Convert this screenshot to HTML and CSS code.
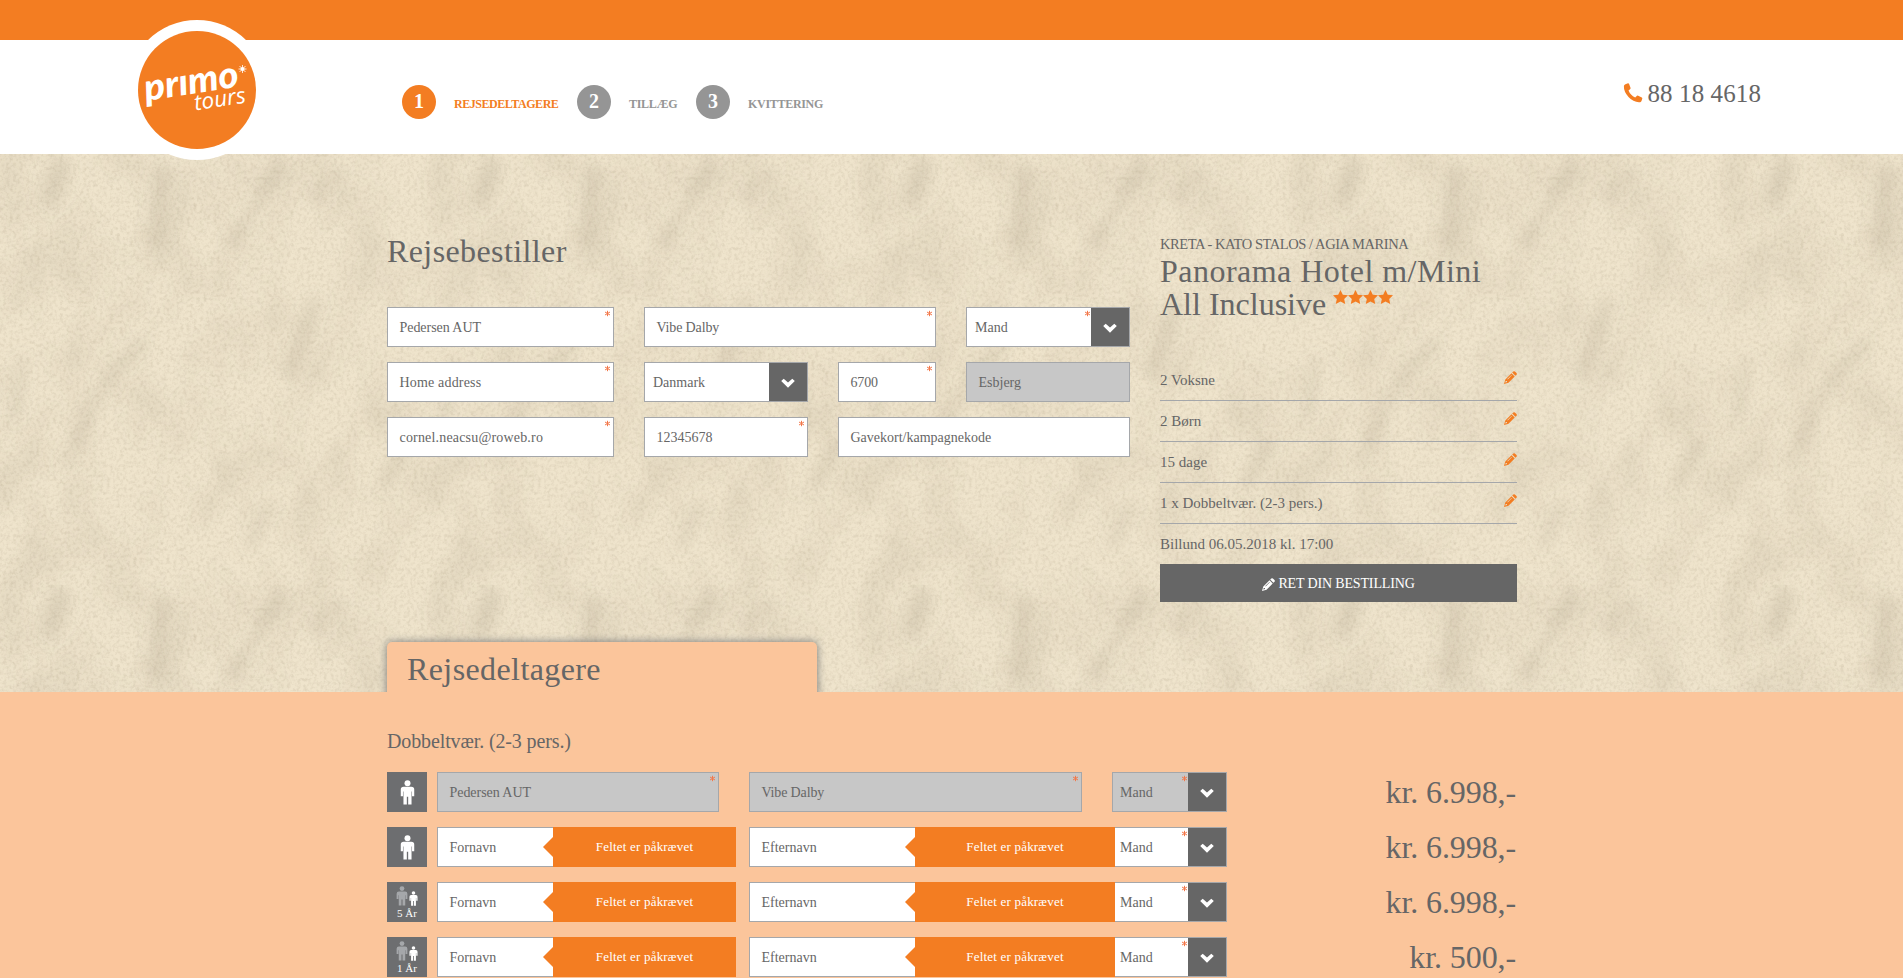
FILE: index.html
```
<!DOCTYPE html>
<html lang="da">
<head>
<meta charset="utf-8">
<title>Primo Tours - Rejsedeltagere</title>
<link rel="stylesheet" href="styles.css">
</head>
<body>
<svg class="defs" width="0" height="0" aria-hidden="true">
  <symbol id="star" viewBox="0 0 15 14"><path d="M7.500 0l2.300 4.700 5.200.6-3.800 3.600 1 5.100-4.700-2.500L2.800 14l1-5.100L0 5.300l5.200-.6z"/></symbol>
  <symbol id="pencil" viewBox="0 0 13 13"><path fill-rule="evenodd" d="M9.300.5q.8-.7 1.600 0L12.500 2.100q.7.800 0 1.600L11.400 4.800 8.200 1.600zM7.500 2.300l3.200 3.200L4.500 11.700 0 13 1.300 8.500zM1.700 10l-.4 1.600 1.200-.3.600-.5-.2-.7-.8-.2zM7.500 3.900L3.300 8.100l.4.4L7.900 4.300z"/></symbol>
  <symbol id="down" viewBox="0 0 14 10"><path d="M2.700.7L7 4.600 11.300.7 13.800 3.100 7 9.700.2 3.100z"/></symbol>
  <symbol id="ast" viewBox="0 0 7 7"><path d="M3.500.8v5.400M1 2l5 3M6 2l-5 3" fill="none" stroke="#f3784a" stroke-width="1"/></symbol>
  <symbol id="person" viewBox="0 0 15 26"><circle cx="7.500" cy="3.400" r="3.100"/><path d="M3.500 7h8Q14.500 7 14.500 10v7h-2.300v-5h-.5v13.500H8.200v-8H6.800v8H3.300V12h-.5v5H.5v-7Q.5 7 3.500 7z"/></symbol>
</svg>

<header class="header">
  <div class="topbar"></div>
  <div class="nav">
    <svg class="logo" viewBox="0 0 140 140" role="img" aria-label="Primo Tours">
      <circle cx="70" cy="70" r="70" fill="#fff"/>
      <circle cx="70" cy="70" r="59" fill="#f37d22"/>
      <g transform="rotate(-9 70 70)" fill="#fff">
        <text class="logo-main" x="18" y="73" textLength="95" lengthAdjust="spacingAndGlyphs">prımo</text>
        <text class="logo-sub" x="65" y="90" textLength="52" lengthAdjust="spacingAndGlyphs">tours</text>
      </g>
      <circle cx="115.500" cy="49" r="2" fill="#fff"/>
      <path d="M115.500 45v8M111.500 49h8M112.500 46l6 6M118.500 46l-6 6" stroke="#fff" stroke-width=".8"/>
    </svg>
    <ol class="steps">
      <li class="step step-on"><span class="num">1</span><span class="step-name">REJSEDELTAGERE</span></li>
      <li class="step"><span class="num">2</span><span class="step-name">TILLÆG</span></li>
      <li class="step"><span class="num">3</span><span class="step-name">KVITTERING</span></li>
    </ol>
    <div class="phone">
      <svg class="phone-icon" viewBox="0 0 20 20"><path d="M2.400 1.200L5 .3q.7-.1 1 .5l1.500 4q.2.700-.2 1.200L5.500 7.500q1.800 4.500 6.700 7l1.800-1.700q.5-.4 1.200-.1l3.600 1.700q.7.400.5 1.100l-.8 2.600q-.4.900-1.300 1.100-6.500.6-11.700-5.100Q.6 8.600.9 3.100 1.100 1.600 2.400 1.200z"/></svg>
      <span>88 18 4618</span>
    </div>
  </div>
</header>

<main>
<section class="sand">
  <svg class="texture" width="1903" height="538" aria-hidden="true">
    <defs>
      <filter id="grain" x="0" y="0" width="100%" height="100%" color-interpolation-filters="sRGB">
        <feTurbulence type="fractalNoise" baseFrequency=".3" numOctaves="3" seed="4" stitchTiles="stitch"/>
        <feColorMatrix values="0 0 0 0 .42  0 0 0 0 .36  0 0 0 0 .25  .9 .5 0 0 -.6"/>
      </filter>
      <filter id="clouds" x="0" y="0" width="100%" height="100%" color-interpolation-filters="sRGB">
        <feTurbulence type="fractalNoise" baseFrequency=".022 .014" numOctaves="4" seed="11" stitchTiles="stitch"/>
        <feColorMatrix values="0 0 0 0 .5  0 0 0 0 .44  0 0 0 0 .34  1.100 0 0 0 -.42"/>
      </filter>
      <filter id="soft" x="-50%" y="-50%" width="200%" height="200%"><feGaussianBlur stdDeviation="7"/></filter>
      <pattern id="paper" width="431" height="431" patternUnits="userSpaceOnUse">
        <rect width="431" height="431" fill="#efe4cc"/>
        <rect width="431" height="431" filter="url(#clouds)" opacity=".2"/>
        <g filter="url(#soft)" stroke="#b3a78f" fill="none" stroke-linecap="round" opacity=".3">
          <path d="M60 14L50 44" stroke-width="22"/>
          <path d="M280 8Q250 60 232 90" stroke-width="10"/>
          <path d="M162 18L155 88" stroke-width="16"/>
          <path d="M340 16L315 45" stroke-width="9"/>
          <path d="M314 150Q305 175 290 220" stroke-width="13"/>
          <path d="M140 190Q100 225 76 290L64 310" stroke-width="10"/>
          <path d="M405 290L385 330" stroke-width="13"/>
          <path d="M22 205L14 265" stroke-width="8"/>
          <path d="M270 350L250 390" stroke-width="9"/>
        </g>
        <rect width="431" height="431" filter="url(#grain)" opacity=".26"/>
      </pattern>
    </defs>
    <rect width="1903" height="538" fill="url(#paper)"/>
  </svg>
  <div class="wrap top">
    <form class="booker">
      <h1 class="title">Rejsebestiller</h1>
      <div class="form-row row-a">
        <div class="field ls-1">Pedersen AUT<svg class="ast"><use href="#ast"/></svg></div>
        <div class="field ls-2">Vibe Dalby<svg class="ast"><use href="#ast"/></svg></div>
        <div class="select"><span class="value">Mand<svg class="ast"><use href="#ast"/></svg></span><span class="drop"><svg class="down"><use href="#down"/></svg></span></div>
      </div>
      <div class="form-row row-b">
        <div class="field wide">Home address<svg class="ast"><use href="#ast"/></svg></div>
        <div class="select"><span class="value">Danmark</span><span class="drop"><svg class="down"><use href="#down"/></svg></span></div>
        <div class="field ls-2">6700<svg class="ast"><use href="#ast"/></svg></div>
        <div class="field off">Esbjerg</div>
      </div>
      <div class="form-row row-c">
        <div class="field wide">cornel.neacsu@roweb.ro<svg class="ast"><use href="#ast"/></svg></div>
        <div class="field">12345678<svg class="ast"><use href="#ast"/></svg></div>
        <div class="field">Gavekort/kampagnekode</div>
      </div>
    </form>
    <aside class="summary">
      <div class="place">KRETA - KATO STALOS / AGIA MARINA</div>
      <h2 class="hotel"><span class="hotel-a">Panorama Hotel m/Mini</span><br>All Inclusive <span class="stars"><svg><use href="#star"/></svg><svg><use href="#star"/></svg><svg><use href="#star"/></svg><svg><use href="#star"/></svg></span></h2>
      <ul class="facts">
        <li>2 Voksne<svg class="pencil"><use href="#pencil"/></svg></li>
        <li>2 Børn<svg class="pencil"><use href="#pencil"/></svg></li>
        <li>15 dage<svg class="pencil"><use href="#pencil"/></svg></li>
        <li>1 x Dobbeltvær. (2-3 pers.)<svg class="pencil"><use href="#pencil"/></svg></li>
        <li>Billund 06.05.2018 kl. 17:00</li>
      </ul>
      <div class="button"><svg class="pencil"><use href="#pencil"/></svg><span>RET DIN BESTILLING</span></div>
    </aside>
  </div>
  <div class="wrap"><h2 class="tab">Rejsedeltagere</h2></div>
</section>

<section class="travellers">
  <div class="wrap">
    <h3 class="room">Dobbeltvær. (2-3 pers.)</h3>
    <div class="guest">
      <div class="who"><svg class="adult"><use href="#person"/></svg></div>
      <div class="field off ls-1">Pedersen AUT<svg class="ast"><use href="#ast"/></svg></div>
      <div class="field off ls-2">Vibe Dalby<svg class="ast"><use href="#ast"/></svg></div>
      <div class="select off"><span class="value">Mand<svg class="ast"><use href="#ast"/></svg></span><span class="drop"><svg class="down"><use href="#down"/></svg></span></div>
      <div class="price">kr. 6.998,-</div>
    </div>
    <div class="guest">
      <div class="who"><svg class="adult"><use href="#person"/></svg></div>
      <div class="field">Fornavn<span class="error error-first">Feltet er påkrævet</span></div>
      <div class="field">Efternavn<span class="error error-last">Feltet er påkrævet</span></div>
      <div class="select"><span class="value">Mand<svg class="ast"><use href="#ast"/></svg></span><span class="drop"><svg class="down"><use href="#down"/></svg></span></div>
      <div class="price">kr. 6.998,-</div>
    </div>
    <div class="guest">
      <div class="who who-child"><div class="pair"><svg class="parent"><use href="#person"/></svg><svg class="child"><use href="#person"/></svg></div><span class="age">5 År</span></div>
      <div class="field">Fornavn<span class="error error-first">Feltet er påkrævet</span></div>
      <div class="field">Efternavn<span class="error error-last">Feltet er påkrævet</span></div>
      <div class="select"><span class="value">Mand<svg class="ast"><use href="#ast"/></svg></span><span class="drop"><svg class="down"><use href="#down"/></svg></span></div>
      <div class="price">kr. 6.998,-</div>
    </div>
    <div class="guest">
      <div class="who who-child"><div class="pair"><svg class="parent"><use href="#person"/></svg><svg class="child"><use href="#person"/></svg></div><span class="age">1 År</span></div>
      <div class="field">Fornavn<span class="error error-first">Feltet er påkrævet</span></div>
      <div class="field">Efternavn<span class="error error-last">Feltet er påkrævet</span></div>
      <div class="select"><span class="value">Mand<svg class="ast"><use href="#ast"/></svg></span><span class="drop"><svg class="down"><use href="#down"/></svg></span></div>
      <div class="price">kr. 500,-</div>
    </div>
  </div>
</section>
</main>
</body>
</html>
```
FILE: styles.css
```
* { box-sizing: border-box; }
body {
  margin: 0;
  height: 978px;
  overflow: hidden;
  font-family: "Liberation Serif", serif;
  font-size: 14px;
  color: #666;
  background: #fbc59b;
}
h1, h2, h3, ol, ul { margin: 0; padding: 0; font-weight: 400; list-style: none; }
svg { display: block; flex: none; }
.defs { position: absolute; }
.ls-1 { letter-spacing: -.05px; }
.ls-2 { letter-spacing: -.15px; }
.wide { letter-spacing: .18px; }

.header { position: relative; z-index: 2; }
.topbar { height: 40px; background: #f37d22; }
.nav { display: flex; align-items: flex-start; height: 114px; background: #fff; }
.logo { width: 140px; height: 140px; margin: -20px 0 0 127px; }
.logo-main { font: italic 900 37px Lato, sans-serif; }
.logo-sub { font: italic 400 22px "Open Sans", sans-serif; }
.steps { display: flex; margin: 45px 0 0 135px; }
.step { display: flex; align-items: center; gap: 18px; height: 34px; color: #959595; }
.step:nth-child(1) { width: 175px; }
.step:nth-child(2) { width: 119px; }
.num {
  width: 34px; height: 34px; border-radius: 50%;
  background: #959595; color: #fff;
  font-size: 20px; font-weight: 700; line-height: 33px; text-align: center;
}
.step-name { font-size: 12px; font-weight: 700; padding-top: 4px; letter-spacing: -.3px; white-space: nowrap; }
.step-on { color: #f37d22; }
.step-on .step-name { letter-spacing: -.45px; }
.step-on .num { background: #f37d22; }
.phone { display: flex; gap: 5px; margin: 39px 142px 0 auto; font-size: 25px; line-height: 29px; letter-spacing: .1px; }
.phone-icon { width: 20px; height: 20px; margin-top: 4px; fill: #f37d22; }

.sand { position: relative; height: 538px; overflow: hidden; background: #eadfc8; }
.texture { position: absolute; inset: 0; }
.wrap { position: relative; width: 1130px; margin-left: 387px; }
.top { display: flex; justify-content: space-between; height: 488px; }
.booker { width: 743px; padding-top: 79px; }
.title { font-size: 32px; line-height: 36px; height: 74px; letter-spacing: .4px; }
.form-row { display: grid; column-gap: 30px; margin-bottom: 15px; }
.row-a { grid-template-columns: 227px 292px 164px; }
.row-b { grid-template-columns: 227px 164px 98px 164px; }
.row-c { grid-template-columns: 227px 164px 292px; }
.field, .select { position: relative; height: 40px; border: 1px solid #a5a7aa; background: #fff; line-height: 40px; white-space: nowrap; }
.field { padding-left: 11.5px; }
.select { display: flex; padding-left: 8px; }
.value { position: relative; flex: 1; }
.drop { display: flex; align-items: center; justify-content: center; width: 38px; background: #666; }
.down { width: 14px; height: 10px; margin-top: 2px; fill: #fff; }
.off, .select.off { background: #c7c7c7; }
.ast { position: absolute; top: 2px; right: 2px; width: 7px; height: 7px; }
.value .ast { right: 0; }

.summary { width: 357px; padding-top: 81px; }
.place { margin-bottom: 2px; font-size: 14.5px; line-height: 18px; letter-spacing: -.43px; white-space: nowrap; }
.hotel { height: 105px; font-size: 32px; line-height: 33px; white-space: nowrap; }
.hotel-a { letter-spacing: .48px; }
.stars { display: inline-flex; vertical-align: 11px; margin-left: -1px; }
.stars svg { width: 15px; height: 14px; fill: #f37d22; }
.facts { font-size: 15px; }
.facts li { display: flex; justify-content: space-between; align-items: flex-start; height: 41px; padding-top: 10px; line-height: 21px; border-bottom: 1px solid #a5a7aa; }
.facts li:last-child { border: 0; height: 40px; }
.pencil { width: 13px; height: 13px; fill: #f37d22; }
.facts .pencil { margin-top: 1px; }
.button { display: flex; align-items: center; justify-content: center; gap: 3px; height: 38px; padding-top: 2px; background: #666; color: #fff; letter-spacing: -.15px; }
.button .pencil { fill: #fff; }

.tab { width: 430px; height: 60px; padding-left: 20px; border-radius: 5px 5px 0 0; background: #fbc59b; box-shadow: 0 0 8px #777; font-size: 32px; line-height: 55px; letter-spacing: .4px; }
.travellers { padding-top: 37px; background: #fbc59b; }
.room { height: 43px; font-size: 20px; line-height: 25px; letter-spacing: -.12px; }
.guest { display: grid; grid-template-columns: 50px 312px 363px 115px 1fr; margin-bottom: 15px; }
.guest > .field { margin-right: 30px; }
.guest .select { padding-left: 7px; }
.who { display: flex; flex-direction: column; align-items: center; width: 40px; height: 40px; padding-top: 8px; background: #6d6e70; fill: #fff; }
.adult { width: 15px; height: 25px; }
.who-child { padding-top: 4px; }
.pair { display: flex; align-items: flex-end; gap: 1px; }
.parent { width: 12px; height: 20px; fill: #a5a7aa; }
.child { width: 9px; height: 15px; }
.age { font-size: 11px; line-height: 15px; color: #fff; }
.error { position: absolute; top: -1px; height: 40px; z-index: 1; background: #f37d22; color: #fff; font-size: 13px; line-height: 39px; letter-spacing: .2px; text-align: center; }
.error::before { content: ""; position: absolute; top: 10px; left: -10px; border: 10px solid transparent; border-left: 0; border-right-color: #f37d22; }
.error-first { left: 115px; width: 183px; }
.error-last { left: 165px; width: 200px; }
.price { font-size: 32px; line-height: 40px; text-align: right; padding-right: 1px; letter-spacing: -.1px; }
```
